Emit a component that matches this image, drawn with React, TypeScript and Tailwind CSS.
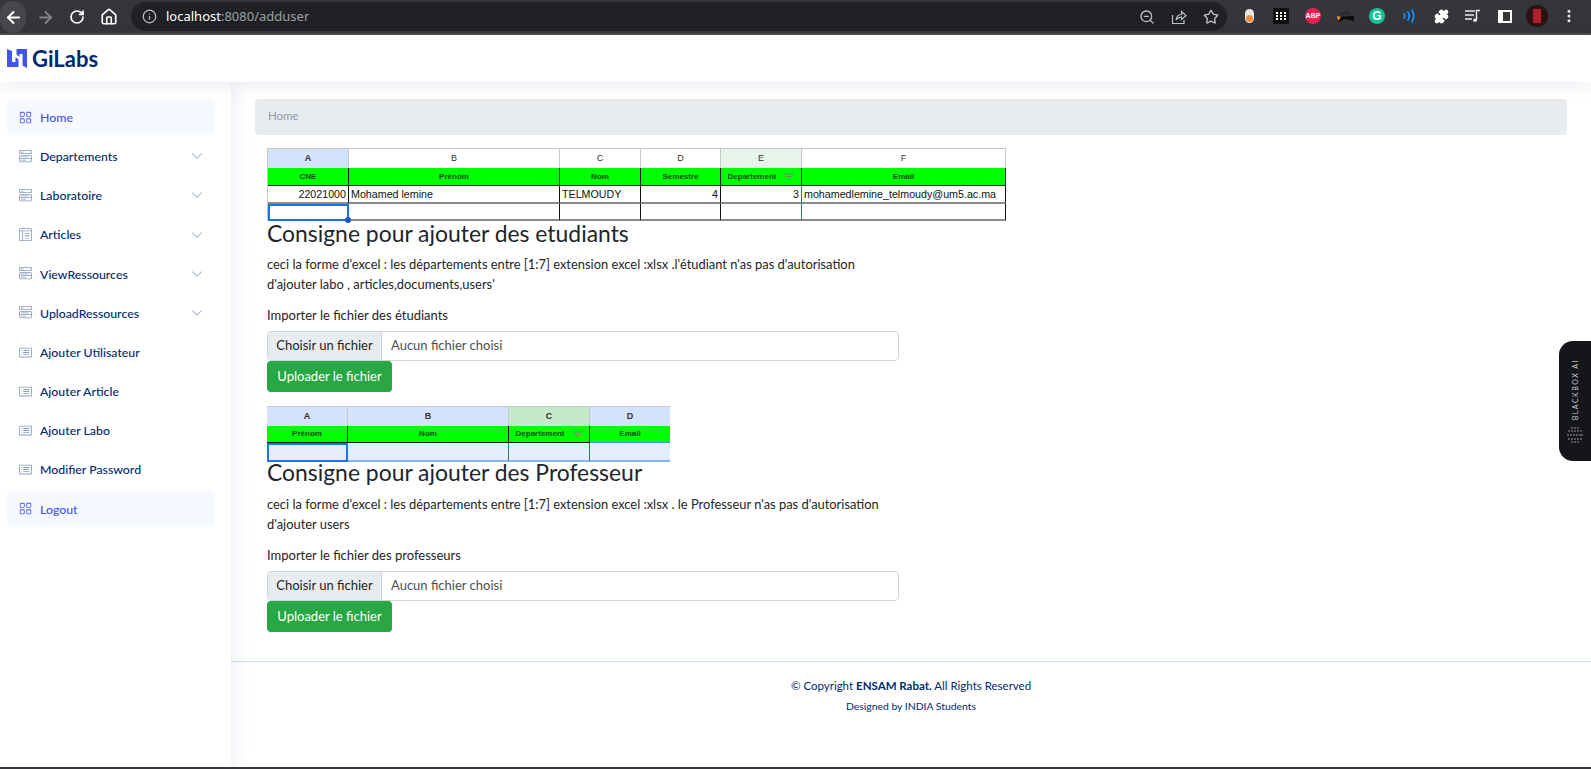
import React from "react";
import {
  BsGrid,
  BsMenuButtonWide,
  BsLayoutTextWindowReverse,
  BsCardList,
  BsChevronDown,
} from "react-icons/bs";
import {
  ArrowLeft,
  ArrowRight,
  RotateCw,
  Home,
  Info,
  ZoomOut,
  Star,
  Puzzle,
  EllipsisVertical,
} from "lucide-react";

type NavItem = {
  label: string;
  icon: React.ReactNode;
  active?: boolean;
  caret?: boolean;
};

const navItems: NavItem[] = [
  { label: "Home", icon: <BsGrid />, active: true },
  { label: "Departements", icon: <BsMenuButtonWide />, caret: true },
  { label: "Laboratoire", icon: <BsMenuButtonWide />, caret: true },
  { label: "Articles", icon: <BsLayoutTextWindowReverse />, caret: true },
  { label: "ViewRessources", icon: <BsMenuButtonWide />, caret: true },
  { label: "UploadRessources", icon: <BsMenuButtonWide />, caret: true },
  { label: "Ajouter Utilisateur", icon: <BsCardList /> },
  { label: "Ajouter Article", icon: <BsCardList /> },
  { label: "Ajouter Labo", icon: <BsCardList /> },
  { label: "Modifier Password", icon: <BsCardList /> },
  { label: "Logout", icon: <BsGrid />, active: true },
];

function BrowserBar() {
  return (
    <div className="flex h-[35px] items-start bg-[#35363a] border-b-2 border-[#4a4b4e] text-[#dfe1e5]">
      <div className="flex w-[131px] pt-[1px]">
        <div className="flex h-8 w-[26px] items-center justify-center rounded-full bg-[#47484b] mr-[3px]">
          <ArrowLeft size={19} strokeWidth={2.4} color="#ffffff" />
        </div>
        <div className="flex h-8 w-8 items-center justify-center">
          <ArrowRight size={19} strokeWidth={2.4} color="#7f8184" />
        </div>
        <div className="flex h-8 w-8 items-center justify-center">
          <RotateCw size={16} strokeWidth={2.6} color="#ffffff" />
        </div>
        <div className="flex h-8 w-8 items-center justify-center">
          <Home size={18} strokeWidth={2.2} color="#ffffff" />
        </div>
      </div>
      <div className="mt-[2px] flex h-[29px] w-[1096px] items-center rounded-full bg-[#202124] pl-[11px]">
        <Info size={15} color="#bdc1c6" />
        <div className="ml-[9px] flex-1 text-[13px] font-['Noto_Sans',sans-serif] text-[#9aa0a6]">
          <span className="text-white">localhost</span>:8080/adduser
        </div>
        <div className="flex w-[96px] text-[#bdc1c6]">
          <div className="flex w-8 justify-center"><ZoomOut size={16} /></div>
          <div className="flex w-8 justify-center">
            <svg width="16" height="16" viewBox="0 0 16 16" fill="none" stroke="currentColor" strokeWidth="1.2">
              <path d="M1.5 6 V14.5 H13 V11" />
              <path d="M5 11 C5.5 7.5 8 5.5 10.5 5.5 V2.5 L15 6.8 L10.5 10.5 V8 C8.5 8 6.5 9 5 11 Z" />
            </svg>
          </div>
          <div className="flex w-8 justify-center"><Star size={16} /></div>
        </div>
      </div>
      <div className="ml-[6px] flex h-8 items-center">
        <div className="flex w-8 justify-center">
          <div className="flex h-[14px] w-[9px] items-end justify-center rounded-full bg-[#e8e8e8] pb-[1px]">
            <div className="h-[7px] w-[7px] rounded-full bg-[#f28b3c]" />
          </div>
        </div>
        <div className="flex w-8 justify-center">
          <div className="grid h-4 w-4 grid-cols-3 content-center justify-items-center gap-[1px] bg-[#111111] px-[2px]">
            {Array.from({ length: 9 }).map((_, i) => (
              <div key={i} className="h-[2px] w-[2px] bg-white" />
            ))}
          </div>
        </div>
        <div className="flex w-8 justify-center">
          <div className="flex h-4 w-4 items-center justify-center rounded-full bg-[#e8204f] text-[7px] font-bold text-white font-['Liberation_Sans',sans-serif]">
            ABP
          </div>
        </div>
        <div className="flex w-8 justify-center">
          <svg width="17" height="14" viewBox="0 0 17 14">
            <path d="M3 4 L11 2 L14 5 L3 6 Z" fill="#2a2a2a" />
            <path d="M0 8 L17 7 L17 12 L8 10 L1 13 Z" fill="#0a0a0a" />
            <path d="M0 7 L4 8 L1 12 Z" fill="#f0a020" />
          </svg>
        </div>
        <div className="flex w-8 justify-center">
          <div className="flex h-4 w-4 items-center justify-center rounded-full bg-[#15c39a] text-[12px] font-bold leading-none text-white font-['Liberation_Sans',sans-serif]">
            G
          </div>
        </div>
        <div className="flex w-8 justify-center">
          <svg width="14" height="14" viewBox="0 0 14 14" fill="none" stroke="#1a8cf0" strokeWidth="1.8" strokeLinecap="round">
            <path d="M2 5 Q3.5 7 2 9" />
            <path d="M6 3 Q8.5 7 6 11" />
            <path d="M10 1 Q13.5 7 10 13" />
          </svg>
        </div>
        <div className="flex w-8 justify-center">
          <Puzzle size={15} fill="#ffffff" color="#ffffff" />
        </div>
        <div className="flex w-8 justify-center">
          <svg width="16" height="14" viewBox="0 0 16 14" fill="none" stroke="#e8eaed" strokeWidth="1.4">
            <path d="M0 2 H10 M0 6 H9 M0 10 H7" />
            <path d="M11.5 11 V1.5 H15" />
            <circle cx="10" cy="11.2" r="1.8" fill="#e8eaed" stroke="none" />
          </svg>
        </div>
        <div className="flex w-8 justify-center">
          <div className="flex h-[13px] w-[14px] justify-end bg-white p-[2px] pl-0">
            <div className="h-full w-[7px] bg-[#35363a]" />
          </div>
        </div>
        <div className="flex w-8 justify-center">
          <div className="flex h-[22px] w-[22px] items-center justify-center rounded-full bg-[#2b1214]">
            <div className="h-[14px] w-[8px] bg-[#b3202a]" />
          </div>
        </div>
        <div className="flex w-8 justify-center">
          <EllipsisVertical size={16} color="#e8eaed" strokeWidth={2.6} />
        </div>
      </div>
    </div>
  );
}

function Sidebar() {
  return (
    <aside className="relative flex w-[231px] shrink-0 flex-col gap-[3.2px] bg-white pl-[7px] pr-[16px] pt-[17px] shadow-[0_0_20px_rgba(1,41,112,0.1)]">
      {navItems.map((item) => (
        <div
          key={item.label}
          className={
            item.active
              ? "flex h-[36px] items-center rounded-[4px] bg-[#f6f9ff] pl-[12px] pr-[12px] text-[#4154f1]"
              : "flex h-[36px] items-center rounded-[4px] pl-[12px] pr-[12px] text-[#012970]"
          }
        >
          <span
            className={
              item.active
                ? "mr-[8px] text-[13px] text-[#4154f1]"
                : "mr-[8px] text-[13px] text-[#899bbd]"
            }
          >
            {item.icon}
          </span>
          <span className="flex-1 pt-[2px] text-[12.3px] font-medium">{item.label}</span>
          {item.caret && <BsChevronDown className="text-[12px] text-[#899bbd]" />}
        </div>
      ))}
    </aside>
  );
}

const hdr =
  "flex items-center justify-center border-r border-[#c7c7c7] text-[9px] text-[#333333]";
const grn =
  "flex items-center justify-center border-r border-[#111111] border-b border-b-[#111111] text-[8px] font-bold text-[#0f4a12]";
const cell =
  "flex items-center border-r border-[#111111] border-b-2 border-b-[#8c8c8c] text-[10.7px] text-[#111111]";

function FilterMark() {
  return (
    <svg width="10" height="7" viewBox="0 0 10 7" className="ml-[8px]" fill="none" stroke="#5f8f6a" strokeWidth="1">
      <path d="M0 1 H10 M2 3.5 H8 M4 6 H6" />
    </svg>
  );
}

function StudentSheet() {
  return (
    <div className="grid h-[73px] w-[739px] grid-cols-[81px_211px_81px_80px_81px_204px] grid-rows-[19px_18px_18px_17px] border-l border-t border-[#c7c7c7] font-['Liberation_Sans',sans-serif]">
      <div className={`${hdr} bg-[#d3e3fd] font-bold`}>A</div>
      <div className={hdr}>B</div>
      <div className={hdr}>C</div>
      <div className={hdr}>D</div>
      <div className={`${hdr} bg-[#e6f4ea]`}>E</div>
      <div className={hdr}>F</div>

      <div className={`${grn} bg-[#00ff00]`}>CNE</div>
      <div className={`${grn} bg-[#00ff00]`}>Prénom</div>
      <div className={`${grn} bg-[#00ff00]`}>Nom</div>
      <div className={`${grn} bg-[#00ff00]`}>Semestre</div>
      <div className={`${grn} bg-[#00ff00]`}>Departement<FilterMark /></div>
      <div className={`${grn} bg-[#00ff00]`}>Email</div>

      <div className={`${cell} justify-end pr-[2px]`}>22021000</div>
      <div className={`${cell} pl-[2px]`}>Mohamed lemine</div>
      <div className={`${cell} pl-[2px]`}>TELMOUDY</div>
      <div className={`${cell} justify-end pr-[2px]`}>4</div>
      <div className={`${cell} justify-end pr-[2px] border-r-[#2e7d4f]`}>3</div>
      <div className={`${cell} pl-[2px]`}>mohamedlemine_telmoudy@um5.ac.ma</div>

      <div className="relative border-2 border-[#1a73e8]">
        <div className="absolute -bottom-[4px] -right-[4px] h-[6px] w-[6px] rounded-full bg-[#1a56c8]" />
      </div>
      <div className={cell} />
      <div className={cell} />
      <div className={cell} />
      <div className={`${cell} border-r-[#2e7d4f]`} />
      <div className={cell} />
    </div>
  );
}

function ProfSheet() {
  return (
    <div className="grid h-[55px] w-[403px] grid-cols-[81px_161px_81px_80px] grid-rows-[19px_17px_19px] border-t border-[#c7c7c7] font-['Liberation_Sans',sans-serif]">
      <div className={`${hdr} bg-[#d3e3fd] font-bold`}>A</div>
      <div className={`${hdr} bg-[#d3e3fd] font-bold`}>B</div>
      <div className={`${hdr} bg-[#c4eac9] font-bold`}>C</div>
      <div className="flex items-center justify-center bg-[#d3e3fd] text-[9px] font-bold text-[#333333]">D</div>

      <div className={`${grn} bg-[#00ff00] border-b-[#4a90e2]`}>Prénom</div>
      <div className={`${grn} bg-[#00ff00] border-b-[#4a90e2]`}>Nom</div>
      <div className={`${grn} bg-[#00ff00] border-b-[#4a90e2]`}>Departement<FilterMark /></div>
      <div className="flex items-center justify-center border-b border-[#4a90e2] bg-[#00ff00] text-[8px] font-bold text-[#0f4a12]">Email</div>

      <div className="border-2 border-[#1a73e8] bg-[#e5eefc]" />
      <div className="border-b-2 border-r border-[#8ab4f0] border-r-[#2e7d4f] bg-[#e5eefc]" />
      <div className="border-b-2 border-r border-[#8ab4f0] border-r-[#2e7d4f] bg-[#e5eefc]" />
      <div className="border-b-2 border-[#8ab4f0] bg-[#e5eefc]" />
    </div>
  );
}

function UploadForm({ label }: { label: string }) {
  return (
    <div className="w-[632px]">
      <div className="mt-[11px] text-[13px] leading-[20px] text-[#212529]">{label}</div>
      <div className="mt-[6px] flex h-[30px] items-stretch overflow-hidden rounded-[4px] border border-[#ced4da] bg-white text-[13px]">
        <div className="flex w-[114px] items-center justify-center border-r border-[#ced4da] bg-[#e9ecef] text-[#212529]">
          Choisir un fichier
        </div>
        <div className="flex flex-1 items-center pl-[9px] text-[#495057]">Aucun fichier choisi</div>
      </div>
      <button className="flex h-[31px] w-[125px] items-center justify-center rounded-[4px] bg-[#28a745] text-[13px] text-white">
        Uploader le fichier
      </button>
    </div>
  );
}

export default function App() {
  return (
    <div className="relative flex h-[769px] w-[1591px] flex-col overflow-hidden bg-white font-['Lato',sans-serif]">
      <BrowserBar />
      <header className="relative z-10 flex h-[47px] items-center bg-white pl-[7px] shadow-[0_2px_20px_rgba(1,41,112,0.1)]">
        <svg width="20" height="19" viewBox="0 0 20 19" fill="#4154f1">
          <path d="M0 0 L5 2 V13 H8.5 V8 L11.5 10.5 V18 H0 Z" />
          <path d="M20 0 V19 L15.5 16.5 V5 H12.5 V8 L9.5 5.5 V0 Z" />
        </svg>
        <span className="ml-[5px] text-[22px] font-bold leading-none text-[#012970]">GiLabs</span>
      </header>

      <div className="flex flex-1">
        <Sidebar />
        <div className="flex flex-1 flex-col">
          <main className="px-[24px] pt-[17px]">
            <div className="flex h-[36px] items-start rounded-[4px] bg-[#e9ecef] pl-[13px] pt-[8px] text-[11.5px] text-[#8e9aaf]">
              Home
            </div>
            <div className="ml-[12px] mt-[13px]">
              <StudentSheet />
              <h2 className="mt-[-3px] h-[31px] text-[22.9px] leading-[31px] text-[#212529]">
                Consigne pour ajouter des etudiants
              </h2>
              <p className="mt-[5px] w-[632px] text-[12.9px] leading-[20px] text-[#212529]">
                ceci la forme d'excel : les départements entre [1:7] extension excel :xlsx .l'étudiant n'as pas d'autorisation d'ajouter labo , articles,documents,users'
              </p>
              <UploadForm label="Importer le fichier des étudiants" />
              <div className="mt-[14px]">
                <ProfSheet />
              </div>
              <h2 className="mt-[-4px] h-[31px] text-[22.9px] leading-[31px] text-[#212529]">
                Consigne pour ajouter des Professeur
              </h2>
              <p className="mt-[6px] w-[632px] text-[12.9px] leading-[20px] text-[#212529]">
                ceci la forme d'excel : les départements entre [1:7] extension excel :xlsx . le Professeur n'as pas d'autorisation d'ajouter users
              </p>
              <UploadForm label="Importer le fichier des professeurs" />
            </div>
          </main>
          <footer className="mt-[29px] flex flex-1 flex-col items-center border-t border-[#cddfff] pt-[15px] text-[#012970]">
            <div className="text-[11.5px] leading-[18px]">
              © Copyright <strong className="font-bold">ENSAM Rabat.</strong> All Rights Reserved
            </div>
            <div className="mt-[3px] text-[10.4px] leading-[16px]">Designed by INDIA Students</div>
          </footer>
        </div>
      </div>
      <div className="relative z-20 h-[2px] bg-[#35363a]" />

      <div className="absolute right-0 top-[341px] z-30 flex h-[120px] w-[32px] flex-col items-center rounded-l-[14px] bg-[#15161c] pt-[18px]">
        <div className="text-[7px] tracking-[1.5px] text-[#c8c8cc] [writing-mode:vertical-rl] rotate-180">
          BLACKBOX AI
        </div>
        <svg width="16" height="16" viewBox="0 0 16 16" fill="#c8c8cc" className="mt-[7px]">
          {[
            [5, 1], [8, 1], [11, 1],
            [2, 4], [5, 4], [8, 4], [11, 4], [14, 4],
            [1, 8], [4, 8], [7, 8], [10, 8], [13, 8], [15, 8],
            [2, 12], [5, 12], [8, 12], [11, 12], [14, 12],
            [5, 15], [8, 15], [11, 15],
          ].map(([x, y]) => (
            <circle key={`${x}-${y}`} cx={x} cy={y} r="0.7" />
          ))}
        </svg>
      </div>
    </div>
  );
}
